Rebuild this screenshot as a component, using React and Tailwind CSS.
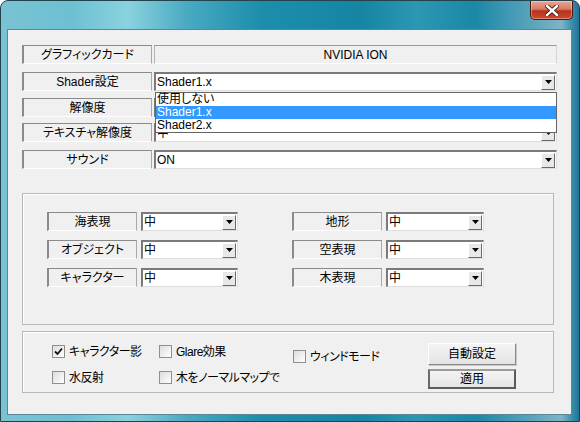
const font = "font-['Liberation_Sans','Noto_Sans_CJK_JP',sans-serif]";

function Label({ children, w }) {
  return (
    <div
      className={`flex h-[19px] shrink-0 items-center justify-center whitespace-nowrap border-t border-l-2 border-r border-b border-t-[#8a8a8a] border-l-[#8a8a8a] border-r-[#a8a8a8] border-b-white bg-[#f0f0f0] text-[12px] leading-none ${w}`}
    >
      {children}
    </div>
  );
}

function Arrow() {
  return (
    <div className="mr-[1px] flex h-[15px] w-[14px] items-center justify-center border border-t-white border-l-white border-r-[#6a6a6a] border-b-[#6a6a6a] bg-[#e8e8e8]">
      <svg width="7" height="4" viewBox="0 0 7 4">
        <path d="M0 0 H7 L3.5 4 Z" fill="#000" />
      </svg>
    </div>
  );
}

function Combo({ value, w, children }) {
  return (
    <div className={`relative shrink-0 ${w}`}>
      <div className="flex h-[19px] items-center border-t-2 border-l-2 border-r border-b border-t-[#7a7a7a] border-l-[#7a7a7a] border-r-[#dedede] border-b-[#dedede] bg-white pl-[1px] text-[12px] leading-none">
        <span className="flex-1">{value}</span>
        <Arrow />
      </div>
      {children}
    </div>
  );
}

function Check({ checked, label }) {
  return (
    <div className="flex h-[13px] items-center gap-[4px] whitespace-nowrap text-[12px] leading-none tracking-[-0.5px]">
      <div className="flex h-[13px] w-[13px] shrink-0 items-center justify-center border border-[#8e8f8f] bg-[linear-gradient(135deg,#dcdcdc,#ffffff)]">
        {checked && (
          <svg width="9" height="9" viewBox="0 0 9 9">
            <path d="M1 4.5 L3.5 7 L8 1.5" stroke="#111" strokeWidth="1.8" fill="none" />
          </svg>
        )}
      </div>
      <span>{label}</span>
    </div>
  );
}

function Btn({ children, h, strong }) {
  return (
    <div
      className={`flex w-[88px] items-center justify-center bg-[linear-gradient(180deg,#f4f4f4,#e4e4e4)] text-[12px] leading-none ${h} ${
        strong
          ? "border-2 border-t-[#9a9a9a] border-l-[#6a6a6a] border-r-[#5a5a5a] border-b-[#5a5a5a]"
          : "border border-t-white border-l-white border-r-[#8a8a8a] border-b-[#8a8a8a] shadow-[1px_1px_0_#c8c8c8]"
      }`}
    >
      {children}
    </div>
  );
}

export default function App() {
  return (
    <div
      className={`flex h-[422px] w-[580px] flex-col overflow-hidden rounded-t-[8px] border border-[#22424c] bg-[linear-gradient(90deg,#79c3d3_0%,#6cc0d2_12%,#8ad2df_22%,#4aaac2_32%,#1c8eab_45%,#1585a3_62%,#2c97b3_72%,#1a88a6_82%,#4e9fb8_90%,#7db4c5_97%,#3a8eab_98.8%,#1f7397_100%)] text-black [font-feature-settings:'palt'] ${font}`}
    >
      <div className="flex h-[28px] shrink-0 justify-end pr-[6px]">
        <div className="flex h-[19px] w-[43px] items-center justify-center rounded-b-[5px] border border-t-0 border-[#4a1a12] bg-[linear-gradient(180deg,#e9a796_0%,#d77a66_45%,#b8321c_55%,#cf4a2c_100%)] shadow-[inset_0_0_0_1px_rgba(255,255,255,0.35)]">
          <svg width="14" height="11" viewBox="0 0 14 11">
            <path d="M2 1 L12 10 M12 1 L2 10" stroke="#3a1a14" strokeWidth="4.2" strokeLinecap="square" />
            <path d="M2 1 L12 10 M12 1 L2 10" stroke="#ffffff" strokeWidth="2.4" strokeLinecap="square" />
          </svg>
        </div>
      </div>

      <div className="flex flex-1">
        <div className="w-[6px] shrink-0" />
        <div className="flex-1 border border-[#5e8593] bg-[#f0f0f0] pl-[14px] pt-[15px]">
          <div className="flex gap-[2px]">
            <Label w="w-[130px]">グラフィックカード</Label>
            <div className="flex h-[19px] w-[403px] items-center justify-center border-t border-l border-r border-b border-t-[#9a9a9a] border-l-[#b4b4b4] border-r-[#d4d4d4] border-b-white text-[12px] leading-none">
              NVIDIA ION
            </div>
          </div>

          <div className="relative z-10 mt-[8px] flex gap-[2px]">
            <Label w="w-[130px]">Shader設定</Label>
            <Combo w="w-[403px]" value="Shader1.x">
              <div className="absolute left-[1px] right-0 top-[20px] border border-[#646464] bg-white text-[12px] leading-[13px]">
                <div className="h-[13px] pl-[1px]">使用しない</div>
                <div className="h-[13px] bg-[#3399ff] pl-[1px] text-white">Shader1.x</div>
                <div className="h-[13px] pl-[1px]">Shader2.x</div>
              </div>
            </Combo>
          </div>

          <div className="mt-[7px] flex gap-[2px]">
            <Label w="w-[130px]">解像度</Label>
            <Combo w="w-[403px]" value="" />
          </div>

          <div className="mt-[6px] flex gap-[2px]">
            <Label w="w-[130px]">テキスチャ解像度</Label>
            <Combo w="w-[403px]" value="中" />
          </div>

          <div className="mt-[8px] flex gap-[2px]">
            <Label w="w-[130px]">サウンド</Label>
            <Combo w="w-[403px]" value="ON" />
          </div>

          <div className="mt-[24px] flex h-[132px] w-[532px] gap-[54px] border border-[#b8b8b8] pl-[24px] pt-[18px] shadow-[inset_1px_1px_0_#ffffff]">
            <div className="flex flex-col gap-[9px]">
              {["海表現", "オブジェクト", "キャラクター"].map((t) => (
                <div key={t} className="flex gap-[4px]">
                  <Label w="w-[90px]">{t}</Label>
                  <Combo w="w-[97px]" value="中" />
                </div>
              ))}
            </div>
            <div className="flex flex-col gap-[9px]">
              {["地形", "空表現", "木表現"].map((t) => (
                <div key={t} className="flex gap-[4px]">
                  <Label w="w-[90px]">{t}</Label>
                  <Combo w="w-[98px]" value="中" />
                </div>
              ))}
            </div>
          </div>

          <div className="mt-[6px] flex h-[62px] w-[532px] items-start border border-[#b8b8b8] pl-[29px] pt-[11px] shadow-[inset_1px_1px_0_#ffffff]">
            <div className="mt-[2px] flex w-[107px] flex-col gap-[13px]">
              <Check checked label="キャラクター影" />
              <Check label="水反射" />
            </div>
            <div className="mt-[2px] flex w-[134px] flex-col gap-[13px]">
              <Check label="Glare効果" />
              <Check label="木をノーマルマップで" />
            </div>
            <div className="mt-[7px] w-[135px]">
              <Check label="ウィンドモード" />
            </div>
            <div className="flex flex-col gap-[4px]">
              <Btn h="h-[22px]">自動設定</Btn>
              <Btn h="h-[20px]" strong>
                適用
              </Btn>
            </div>
          </div>
        </div>
        <div className="w-[7px] shrink-0" />
      </div>
      <div className="h-[6px] shrink-0" />
    </div>
  );
}
